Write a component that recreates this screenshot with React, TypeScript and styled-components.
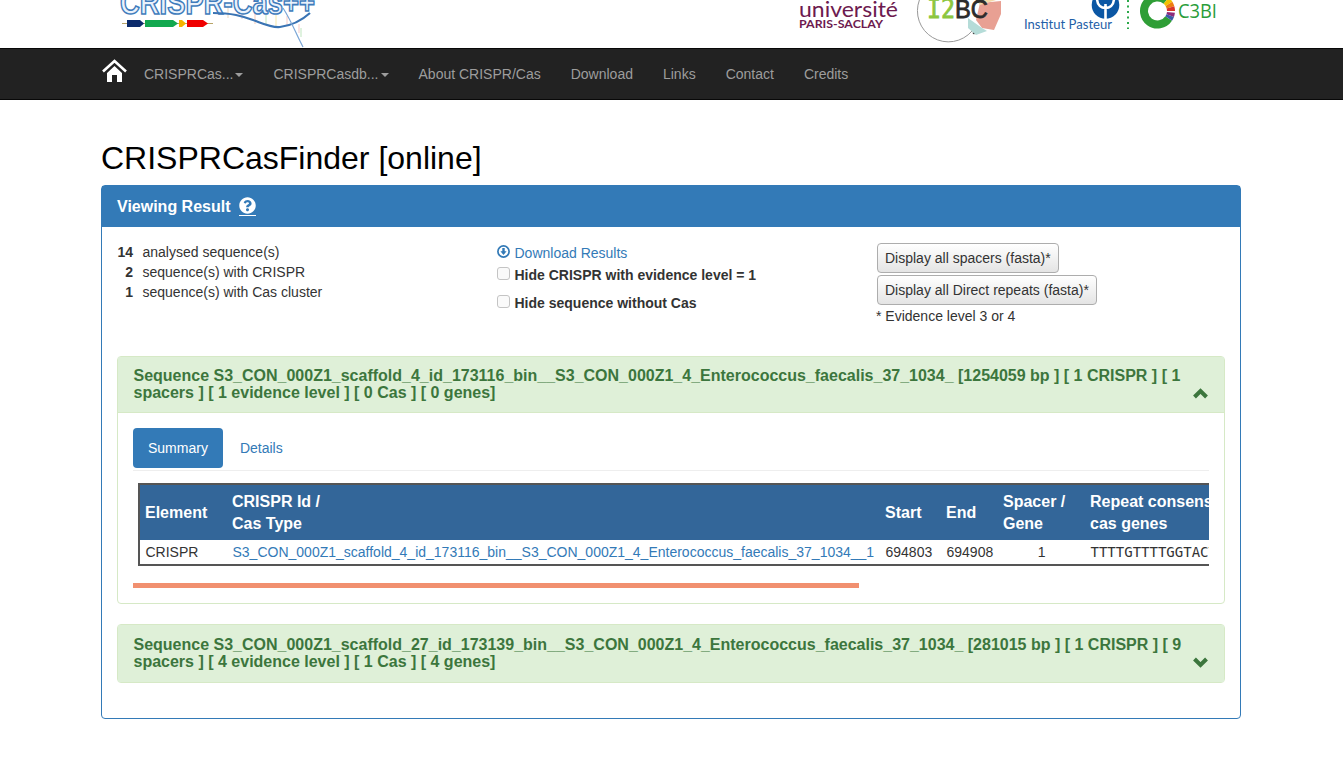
// CRISPRCasFinder result page
import styled, { createGlobalStyle } from "styled-components";
import { FaQuestionCircle } from "react-icons/fa";

const GlobalStyle = createGlobalStyle`
    * {
        box-sizing: border-box;
    }

    body {
        margin: 0;
        background: #fff;
        color: #333;
        font-family: "Liberation Sans", Arial, sans-serif;
        font-size: 14px;
        line-height: 20px;
    }
`;

const LogoBar = styled.header`
    width: 1171px;
    height: 48px;
    margin: 0 auto;
    padding: 0 32px 0 24px;
    display: flex;
    justify-content: space-between;
    overflow: hidden;
`;

const NavBar = styled.nav`
    height: 52px;
    background: #222;
    border-top: 1px solid #080808;
    border-bottom: 1px solid #080808;
`;

const NavInner = styled.div`
    width: 1171px;
    height: 100%;
    margin: 0 auto;
    padding-left: 15px;
    display: flex;
    align-items: center;
`;

const HomeLink = styled.a`
    display: flex;
    width: 28px;
    margin-bottom: 8px;
`;

const NavLink = styled.a`
    padding: 0 15px;
    color: #9d9d9d;
    white-space: nowrap;
`;

const Caret = styled.span`
    display: inline-block;
    margin-left: 2px;
    vertical-align: middle;
    border-top: 4px solid #9d9d9d;
    border-left: 4px solid transparent;
    border-right: 4px solid transparent;
`;

const Main = styled.main`
    width: 1171px;
    margin: 0 auto;
    padding: 0 16px 20px 15px;
`;

const Title = styled.h1`
    margin: 40px 0 9px;
    color: #000;
    font-size: 32px;
    font-weight: 400;
    line-height: 36px;
`;

const ResultPanel = styled.section`
    border: 1px solid #337ab7;
    border-radius: 4px;
`;

const ResultHeading = styled.h3`
    height: 41px;
    margin: 0;
    padding: 0 15px;
    display: flex;
    align-items: center;
    gap: 8px;
    background: #337ab7;
    color: #fff;
    font-size: 16px;
    font-weight: 700;
`;

const HelpIcon = styled.span`
    display: flex;
    padding-bottom: 1px;
    border-bottom: 1px solid #fff;
`;

const ResultBody = styled.div`
    padding: 15px;
`;

const TopRow = styled.div`
    height: 84px;
    margin-bottom: 30px;
    display: grid;
    grid-template-columns: 380px 380px 1fr;
`;

const StatList = styled.div`
    display: grid;
    grid-template-columns: 16px 1fr;
    column-gap: 9.5px;
    align-content: start;
`;

const StatCount = styled.b`
    text-align: right;
`;

const OptionColumn = styled.div`
    padding-top: 1px;
`;

const DownloadLink = styled.a`
    display: flex;
    align-items: center;
    gap: 4.5px;
    color: #337ab7;

    svg {
        margin-top: -4px;
    }
`;

const CheckRow = styled.label<{ $top: number }>`
    margin-top: ${(props) => props.$top}px;
    display: flex;
    align-items: center;
    gap: 4.5px;
    font-weight: 700;
`;

const Check = styled.input`
    appearance: none;
    width: 13px;
    height: 13px;
    margin: -4px 0 0;
    background: #fafafa;
    border: 1px solid #c4c4c4;
    border-radius: 3px;
`;

const FastaColumn = styled.div`
    padding-top: 1px;
    display: flex;
    flex-direction: column;
    align-items: flex-start;
    gap: 2px;
`;

const FastaButton = styled.button`
    height: 30px;
    padding: 0 7px;
    background: linear-gradient(#fff, #e4e4e4);
    border: 1px solid #adadad;
    border-radius: 4px;
    color: #333;
    font-family: inherit;
    font-size: 14px;
`;

const EvidenceNote = styled.div`
    margin: -1px 0 0 -1px;
`;

const SequencePanel = styled.article`
    margin-bottom: 20px;
    border: 1px solid #d6e9c6;
    border-radius: 4px;
`;

const SequenceHeading = styled.h4<{ $open: boolean }>`
    position: relative;
    margin: 0;
    padding: ${(props) => (props.$open ? "10px 15px 11px 15.5px" : "11px 15px 12px 15.5px")};
    background: #dff0d8;
    color: #3c763d;
    font-size: 16px;
    font-weight: 700;
    line-height: 17px;
    border-bottom: ${(props) => (props.$open ? "1px solid #d6e9c6" : "none")};
`;

const Chevron = styled.svg<{ $open: boolean }>`
    position: absolute;
    top: ${(props) => (props.$open ? 31 : 32)}px;
    right: 16px;
    width: 15px;
    height: 11px;
`;

const SequenceBody = styled.div`
    padding: 15px;
`;

const Tabs = styled.ul`
    margin: 0;
    padding: 0 0 2px;
    display: flex;
    gap: 2px;
    list-style: none;
    border-bottom: 1px solid #eee;
`;

const Tab = styled.li<{ $active?: boolean }>`
    padding: 10px 15px;
    border-radius: 4px;
    background: ${(props) => (props.$active ? "#337ab7" : "transparent")};
    color: ${(props) => (props.$active ? "#fff" : "#337ab7")};
`;

const TableScroll = styled.div`
    margin-top: 12px;
    padding-left: 5px;
    overflow: hidden;
`;

const Table = styled.table`
    width: 1600px;
    table-layout: fixed;
    border-collapse: separate;
    border-spacing: 0;
    border: 2px solid #555;
`;

const Col = styled.col<{ $w: number }>`
    width: ${(props) => props.$w}px;
`;

const Th = styled.th`
    padding: 6px 5px 5px;
    background: #369;
    color: #fff;
    font-size: 16px;
    line-height: 22px;
    text-align: left;
    white-space: nowrap;
`;

const Td = styled.td<{ $center?: boolean }>`
    padding: 2px 5px 2px 5.5px;
    text-align: ${(props) => (props.$center ? "center" : "left")};
    white-space: nowrap;
`;

const IdLink = styled.a`
    color: #337ab7;
`;

const Sequence = styled.span`
    font-family: "DejaVu Sans Mono", monospace;
`;

const ScrollThumb = styled.div`
    width: 726px;
    height: 5px;
    margin-top: 17px;
    background: #f19070;
`;

const ringPoint = (deg: number, r: number) => {
    const a = (deg * Math.PI) / 180;
    return `${367.5 + r * Math.cos(a)} ${11 + r * Math.sin(a)}`;
};

const ringArc = (from: number, to: number) =>
    `M${ringPoint(from, 13.5)} A13.5 13.5 0 ${to - from > 180 ? 1 : 0} 1 ${ringPoint(to, 13.5)}`;

const c3biStripes = [
    { from: -50, to: -32, color: "#f2c200" },
    { from: -32, to: -16, color: "#ee7d11" },
    { from: -16, to: 0, color: "#d9342b" },
    { from: 6, to: 20, color: "#8e2a7b" },
    { from: 20, to: 34, color: "#3b5aa6" },
];

function CrisprLogo() {
    return (
        <svg width="220" height="48" viewBox="0 0 220 48">
            <g strokeWidth="1.2" opacity="0.6">
                <line x1="118" y1="6" x2="118" y2="18" stroke="#e5c9a8" />
                <line x1="132" y1="8" x2="132" y2="19" stroke="#d8b8c8" />
                <line x1="145" y1="12" x2="145" y2="24" stroke="#f2b9a0" />
                <line x1="156" y1="15" x2="156" y2="25" stroke="#a8dca8" />
                <line x1="166" y1="15" x2="166" y2="26" stroke="#f5e18c" />
                <line x1="177" y1="16" x2="177" y2="25" stroke="#f5b7b0" />
                <line x1="189" y1="24" x2="189" y2="33" stroke="#f5b7b0" />
                <line x1="191" y1="28" x2="191" y2="37" stroke="#a8dca8" />
            </g>
            <text
                x="10"
                y="14"
                fontFamily="Liberation Sans, sans-serif"
                fontSize="33"
                fontWeight="700"
                textLength="195"
                lengthAdjust="spacingAndGlyphs"
                fill="#eaf2fb"
                stroke="#3f7cbc"
                strokeWidth="1.6"
            >
                CRISPR-Cas++
            </text>
            <path d="M103 13C122 13 132 16 143 20S162 28 170 27 190 22 200 13" fill="none" stroke="#3a74b4" strokeWidth="2.2" />
            <path d="M173 8C182 22 186 34 193 47" fill="none" stroke="#7ba6d6" strokeWidth="1.2" />
            <line x1="12" y1="23.5" x2="103" y2="23.5" stroke="#b8a468" strokeWidth="1" />
            <polygon points="17,20 30,20 34,23.5 30,27 17,27" fill="#0b2a6b" />
            <polygon points="35,20 63,20 68,23.5 63,27 35,27" fill="#12a84f" />
            <polygon points="69,20 72,20 76,23.5 72,27 69,27" fill="#f5b400" />
            <polygon points="77,20 93,20 98,23.5 93,27 77,27" fill="#f00000" />
        </svg>
    );
}

function PartnerLogos() {
    return (
        <svg width="435" height="48" viewBox="0 0 435 48">
            <g fontFamily="Lato, sans-serif">
                <text x="9" y="17" fontSize="22" fill="#6d1a4f" textLength="99" lengthAdjust="spacingAndGlyphs">
                    université
                </text>
                <text x="9" y="28" fontSize="10.5" fontWeight="700" fill="#6d1a4f" textLength="84" lengthAdjust="spacingAndGlyphs">
                    PARIS-SACLAY
                </text>
            </g>
            <path d="M129.4 0A31 31 0 0 0 182 31" fill="none" stroke="#999" strokeWidth="1" />
            <circle cx="184" cy="33" r="1.3" fill="#444" />
            <polygon points="190,3 211,1 211,14 204,30 192,28 186,20" fill="#e8a093" />
            <polygon points="178,18 192,28 197,31 186,35 178,28" fill="#b5dcd8" />
            <polygon points="186,0 206,0 190,5" fill="#f2d9a8" />
            <text
                x="137"
                y="18"
                fontFamily="DejaVu Sans Mono, monospace"
                fontSize="26"
                fill="#8cc63f"
                stroke="#8cc63f"
                strokeWidth="0.8"
                textLength="28"
                lengthAdjust="spacingAndGlyphs"
            >
                I2
            </text>
            <text
                x="165"
                y="18"
                fontFamily="Liberation Sans, sans-serif"
                fontSize="26"
                fill="#2b2b2b"
                stroke="#2b2b2b"
                strokeWidth="0.8"
                textLength="33"
                lengthAdjust="spacingAndGlyphs"
            >
                BC
            </text>
            <circle cx="315.5" cy="5" r="13.8" fill="#0b57a4" />
            <path d="M307-2C307 6 312 8 315.5 8S324 6 324-2M315.5 4V19" fill="none" stroke="#fff" strokeWidth="2.6" />
            <text
                x="234"
                y="29"
                fontFamily="Lato, sans-serif"
                fontSize="14"
                fill="#1f5fa8"
                textLength="88"
                lengthAdjust="spacingAndGlyphs"
            >
                Institut Pasteur
            </text>
            <line x1="338" y1="0" x2="338" y2="29" stroke="#2ba84a" strokeWidth="2" strokeDasharray="2 3.5" />
            <path d={ringArc(34, 310)} fill="none" stroke="#2f9e36" strokeWidth="8" />
            {c3biStripes.map((stripe) => (
                <path key={stripe.color} d={ringArc(stripe.from, stripe.to)} fill="none" stroke={stripe.color} strokeWidth="8" />
            ))}
            <text
                x="388"
                y="18"
                fontFamily="Open Sans, sans-serif"
                fontSize="20"
                fill="#2a9d3a"
                textLength="39"
                lengthAdjust="spacingAndGlyphs"
            >
                C3BI
            </text>
        </svg>
    );
}

function HomeIcon() {
    return (
        <svg width="27" height="25" viewBox="0 0 27 25">
            <path d="M2 13.5 13.5 3 25 13.5" fill="none" stroke="#fff" strokeWidth="2.6" />
            <path d="M6 15 13.5 8 21 15V24H16V17H11V24H6Z" fill="#fff" />
        </svg>
    );
}

function DownloadIcon() {
    return (
        <svg width="13" height="13" viewBox="0 0 13 13">
            <circle cx="6.5" cy="6.5" r="5.6" fill="none" stroke="#337ab7" strokeWidth="1.7" />
            <path d="M5.3 3H7.7V6.2H9.6L6.5 10 3.4 6.2H5.3Z" fill="#337ab7" />
        </svg>
    );
}

function HeadingChevron({ open }: { open: boolean }) {
    return (
        <Chevron $open={open} viewBox="0 0 15 11">
            <polyline
                points={open ? "1.5,9 7.5,3 13.5,9" : "1.5,2 7.5,8 13.5,2"}
                fill="none"
                stroke="#3c763d"
                strokeWidth="4"
            />
        </Chevron>
    );
}

export default function App() {
    return (
        <>
            <GlobalStyle />
            <LogoBar>
                <CrisprLogo />
                <PartnerLogos />
            </LogoBar>
            <NavBar>
                <NavInner>
                    <HomeLink>
                        <HomeIcon />
                    </HomeLink>
                    <NavLink>
                        CRISPRCas...
                        <Caret />
                    </NavLink>
                    <NavLink>
                        CRISPRCasdb...
                        <Caret />
                    </NavLink>
                    <NavLink>About CRISPR/Cas</NavLink>
                    <NavLink>Download</NavLink>
                    <NavLink>Links</NavLink>
                    <NavLink>Contact</NavLink>
                    <NavLink>Credits</NavLink>
                </NavInner>
            </NavBar>
            <Main>
                <Title>CRISPRCasFinder [online]</Title>
                <ResultPanel>
                    <ResultHeading>
                        Viewing Result
                        <HelpIcon>
                            <FaQuestionCircle size={17} />
                        </HelpIcon>
                    </ResultHeading>
                    <ResultBody>
                        <TopRow>
                            <StatList>
                                <StatCount>14</StatCount>
                                <span>analysed sequence(s)</span>
                                <StatCount>2</StatCount>
                                <span>sequence(s) with CRISPR</span>
                                <StatCount>1</StatCount>
                                <span>sequence(s) with Cas cluster</span>
                            </StatList>
                            <OptionColumn>
                                <DownloadLink>
                                    <DownloadIcon />
                                    Download Results
                                </DownloadLink>
                                <CheckRow $top={2}>
                                    <Check type="checkbox" />
                                    Hide CRISPR with evidence level = 1
                                </CheckRow>
                                <CheckRow $top={8}>
                                    <Check type="checkbox" />
                                    Hide sequence without Cas
                                </CheckRow>
                            </OptionColumn>
                            <FastaColumn>
                                <FastaButton>Display all spacers (fasta)*</FastaButton>
                                <FastaButton>Display all Direct repeats (fasta)*</FastaButton>
                                <EvidenceNote>* Evidence level 3 or 4</EvidenceNote>
                            </FastaColumn>
                        </TopRow>

                        <SequencePanel>
                            <SequenceHeading $open>
                                Sequence S3_CON_000Z1_scaffold_4_id_173116_bin__S3_CON_000Z1_4_Enterococcus_faecalis_37_1034_ [1254059 bp ] [ 1 CRISPR ] [ 1 spacers ] [ 1 evidence level ] [ 0 Cas ] [ 0 genes]
                                <HeadingChevron open />
                            </SequenceHeading>
                            <SequenceBody>
                                <Tabs>
                                    <Tab $active>Summary</Tab>
                                    <Tab>Details</Tab>
                                </Tabs>
                                <TableScroll>
                                    <Table>
                                        <colgroup>
                                            <Col $w={87} />
                                            <Col $w={653} />
                                            <Col $w={61} />
                                            <Col $w={57} />
                                            <Col $w={87} />
                                            <Col $w={651} />
                                        </colgroup>
                                        <thead>
                                            <tr>
                                                <Th>Element</Th>
                                                <Th>
                                                    CRISPR Id /
                                                    <br />
                                                    Cas Type
                                                </Th>
                                                <Th>Start</Th>
                                                <Th>End</Th>
                                                <Th>
                                                    Spacer /
                                                    <br />
                                                    Gene
                                                </Th>
                                                <Th>
                                                    Repeat consensus /
                                                    <br />
                                                    cas genes
                                                </Th>
                                            </tr>
                                        </thead>
                                        <tbody>
                                            <tr>
                                                <Td>CRISPR</Td>
                                                <Td>
                                                    <IdLink>S3_CON_000Z1_scaffold_4_id_173116_bin__S3_CON_000Z1_4_Enterococcus_faecalis_37_1034__1</IdLink>
                                                </Td>
                                                <Td>694803</Td>
                                                <Td>694908</Td>
                                                <Td $center>1</Td>
                                                <Td>
                                                    <Sequence>TTTTGTTTTGGTACTCCAACGATAACAAAAC</Sequence>
                                                </Td>
                                            </tr>
                                        </tbody>
                                    </Table>
                                </TableScroll>
                                <ScrollThumb />
                            </SequenceBody>
                        </SequencePanel>

                        <SequencePanel>
                            <SequenceHeading $open={false}>
                                Sequence S3_CON_000Z1_scaffold_27_id_173139_bin__S3_CON_000Z1_4_Enterococcus_faecalis_37_1034_ [281015 bp ] [ 1 CRISPR ] [ 9 spacers ] [ 4 evidence level ] [ 1 Cas ] [ 4 genes]
                                <HeadingChevron open={false} />
                            </SequenceHeading>
                        </SequencePanel>
                    </ResultBody>
                </ResultPanel>
            </Main>
        </>
    );
}
